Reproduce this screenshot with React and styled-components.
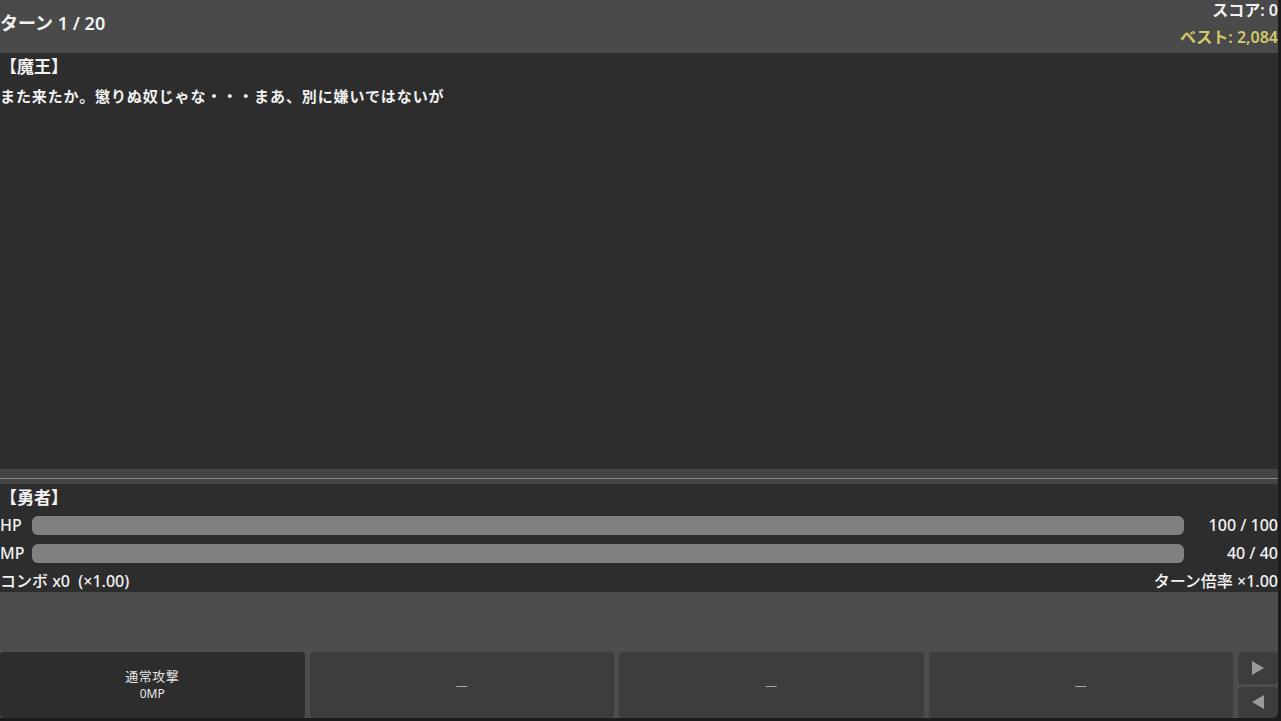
import styled, { createGlobalStyle } from "styled-components";

const GlobalStyle = createGlobalStyle`
  html, body {
    margin: 0;
    padding: 0;
    background: #1c1c1c;
  }
  body {
    font-family: "Noto Sans", "Noto Sans CJK JP", sans-serif;
    color: #f2f2f2;
  }
`;

const Screen = styled.div`
  width: 1278px;
  height: 718px;
  display: flex;
  flex-direction: column;
  overflow: hidden;
  border-bottom-right-radius: 6px;
`;

const Header = styled.header`
  height: 53px;
  flex: none;
  background: #4a4a4a;
  display: flex;
  justify-content: space-between;
  align-items: flex-start;
`;

const TurnLabel = styled.div`
  font-size: 18px;
  font-weight: 600;
  line-height: 22px;
  margin-top: 12px;
`;

const ScoreBox = styled.div`
  display: flex;
  flex-direction: column;
  align-items: flex-end;
`;

const ScoreLine = styled.div`
  font-size: 16px;
  font-weight: 600;
  line-height: 20px;
  color: ${(p) => (p.$best ? "#d2c96a" : "#f2f2f2")};
  margin-top: ${(p) => (p.$best ? "7px" : "0")};
`;

const Message = styled.section`
  flex: 1;
  background: #2d2d2d;
  padding-top: 4px;
`;

const Speaker = styled.div`
  font-size: 17px;
  font-weight: 600;
  line-height: 20px;
`;

const Line = styled.div`
  font-size: 15px;
  font-weight: 600;
  line-height: 20px;
  margin-top: 9px;
  letter-spacing: 0.9px;
`;

const Divider = styled.div`
  height: 15px;
  flex: none;
  background: #444444;
  display: flex;
  flex-direction: column;
  justify-content: center;
  &::after {
    content: "";
    display: block;
    height: 1px;
    margin-top: 3px;
    background: #8a8a8a;
  }
`;

const Hero = styled.section`
  height: 108px;
  flex: none;
  background: #2d2d2d;
  display: flex;
  flex-direction: column;
`;

const HeroTitle = styled.div`
  height: 27px;
  font-size: 17px;
  font-weight: 600;
  line-height: 27px;
`;

const StatRow = styled.div`
  height: 28px;
  display: grid;
  grid-template-columns: 32px 1fr 94px;
  align-items: center;
  font-size: 16px;
  font-weight: 500;
`;

const Bar = styled.div`
  height: 19px;
  border-radius: 6px;
  background: #808080;
  overflow: hidden;
`;

const BarFill = styled.div`
  height: 100%;
  background: #808080;
`;

const StatValue = styled.div`
  text-align: right;
`;

const ComboRow = styled.div`
  height: 25px;
  display: flex;
  justify-content: space-between;
  align-items: center;
  font-size: 16px;
  font-weight: 500;
  white-space: pre;
`;

const Spacer = styled.div`
  height: 60px;
  flex: none;
  background: #4d4d4d;
`;

const Commands = styled.div`
  height: 66px;
  flex: none;
  background: #4d4d4d;
  display: grid;
  grid-template-columns: repeat(4, 1fr) 40px;
  gap: 5px;
`;

const CommandButton = styled.button`
  border: none;
  border-radius: 4px;
  margin: 0;
  padding: 0;
  font-family: inherit;
  background: ${(p) => (p.$active ? "#2d2d2d" : "#3d3d3d")};
  color: ${(p) => (p.$active ? "#e6e6e6" : "#a8a8a8")};
  display: flex;
  flex-direction: column;
  align-items: center;
  justify-content: center;
  font-size: 12px;
  line-height: 17px;
`;

const SkillName = styled.span`
  font-size: 13px;
  letter-spacing: 0.5px;
`;

const Arrows = styled.div`
  display: grid;
  grid-template-rows: 1fr 1fr;
  gap: 3px;
`;

const ArrowButton = styled.button`
  border: none;
  border-radius: 4px;
  margin: 0;
  padding: 0;
  background: #3d3d3d;
  display: flex;
  align-items: center;
  justify-content: center;
`;

const Triangle = ({ dir }) => (
  <svg width="12" height="14" viewBox="0 0 12 14">
    <polygon
      points={dir === "right" ? "0,0 12,7 0,14" : "12,0 0,7 12,14"}
      fill="#9a9a9a"
    />
  </svg>
);

const skills = [
  { name: "通常攻撃", cost: "0MP" },
  null,
  null,
  null,
];

const stats = [
  { label: "HP", cur: 100, max: 100 },
  { label: "MP", cur: 40, max: 40 },
];

export default function App() {
  return (
    <>
      <GlobalStyle />
      <Screen>
        <Header>
          <TurnLabel>ターン 1 / 20</TurnLabel>
          <ScoreBox>
            <ScoreLine>スコア: 0</ScoreLine>
            <ScoreLine $best>ベスト: 2,084</ScoreLine>
          </ScoreBox>
        </Header>
        <Message>
          <Speaker>【魔王】</Speaker>
          <Line>また来たか。懲りぬ奴じゃな・・・まあ、別に嫌いではないが</Line>
        </Message>
        <Divider />
        <Hero>
          <HeroTitle>【勇者】</HeroTitle>
          {stats.map((s) => (
            <StatRow key={s.label}>
              <span>{s.label}</span>
              <Bar>
                <BarFill style={{ width: `${(s.cur / s.max) * 100}%` }} />
              </Bar>
              <StatValue>
                {s.cur} / {s.max}
              </StatValue>
            </StatRow>
          ))}
          <ComboRow>
            <span>{"コンボ x0  (×1.00)"}</span>
            <span>ターン倍率 ×1.00</span>
          </ComboRow>
        </Hero>
        <Spacer />
        <Commands>
          {skills.map((s, i) =>
            s ? (
              <CommandButton key={i} $active>
                <SkillName>{s.name}</SkillName>
                <span>{s.cost}</span>
              </CommandButton>
            ) : (
              <CommandButton key={i}>—</CommandButton>
            )
          )}
          <Arrows>
            <ArrowButton>
              <Triangle dir="right" />
            </ArrowButton>
            <ArrowButton>
              <Triangle dir="left" />
            </ArrowButton>
          </Arrows>
        </Commands>
      </Screen>
    </>
  );
}
